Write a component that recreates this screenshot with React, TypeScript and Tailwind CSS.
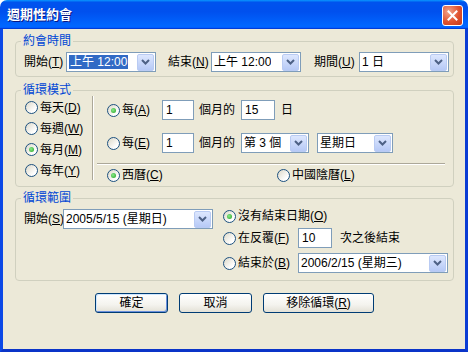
import type { ReactNode } from "react"

function Key({ k }: { k: string }) {
  return (
    <>
      (<span className="underline underline-offset-[1px]">{k}</span>)
    </>
  )
}

function Radio({ checked = false }: { checked?: boolean }) {
  return (
    <span className="flex h-[13px] w-[13px] shrink-0 items-center justify-center rounded-full border border-[#1C5180] bg-[linear-gradient(135deg,#DCD8C8,#FFFFFF_75%)]">
      {checked && (
        <span className="h-[5px] w-[5px] rounded-full bg-[radial-gradient(circle_at_40%_40%,#8BEA8B,#21A121)]" />
      )}
    </span>
  )
}

function DropButton() {
  return (
    <span className="flex h-[17px] w-[17px] shrink-0 items-center justify-center rounded-[2px] border border-[#B9CBF3] bg-[linear-gradient(180deg,#DDE7FE,#B6C9F6)]">
      <svg width="9" height="6" viewBox="0 0 9 6">
        <path d="M1 1 L4.5 4.5 L8 1" fill="none" stroke="#4D6185" strokeWidth="2" />
      </svg>
    </span>
  )
}

function Combo({ className, children }: { className: string; children: ReactNode }) {
  return (
    <div
      className={`flex h-[20px] shrink-0 items-center justify-between border border-[#7F9DB9] bg-white pl-[2px] pr-px ${className}`}
    >
      <span className="truncate leading-[14px]">{children}</span>
      <DropButton />
    </div>
  )
}

function Edit({ className, value }: { className: string; value: string }) {
  return (
    <div className={`flex h-[20px] shrink-0 items-center border border-[#7F9DB9] bg-white pl-[3px] ${className}`}>
      {value}
    </div>
  )
}

function Group({ title, className, children }: { title: string; className: string; children: ReactNode }) {
  return (
    <fieldset className={`rounded-[4px] border border-[#D0D0BF] ${className}`}>
      <legend className="ml-[5px] px-[2px] text-[12px] leading-[14px] text-[#0046D5]">{title}</legend>
      {children}
    </fieldset>
  )
}

function Option({ checked, children }: { checked?: boolean; children: ReactNode }) {
  return (
    <span className="flex items-center gap-[2px]">
      <Radio checked={checked} />
      <span>{children}</span>
    </span>
  )
}

function Btn({ className, children, primary }: { className: string; children: ReactNode; primary?: boolean }) {
  return (
    <button
      className={`h-[20px] rounded-[3px] border border-[#003C74] bg-[linear-gradient(180deg,#FFFFFF,#F4F3EE_60%,#E3E1D6)] text-[12px] leading-[14px] text-black ${
        primary ? "shadow-[inset_1px_1px_0_#CEE7FF,inset_-1px_-1px_0_#6A8FDC]" : ""
      } ${className}`}
    >
      {children}
    </button>
  )
}

export default function App() {
  return (
    <div className="h-[352px] w-[468px] whitespace-nowrap bg-white font-['Liberation_Sans','Noto_Sans_CJK_TC',sans-serif] text-[12px] leading-[14px] text-black">
      <div className="flex h-full flex-col overflow-hidden rounded-t-[7px]">
        {/* Title bar */}
        <div className="flex h-[29px] shrink-0 items-start justify-between bg-[linear-gradient(180deg,#0997FF,#0053EE_8%,#0050EE_40%,#0066FF_88%,#0066FF_93%,#005BFF_95%,#003DD7_96%,#003DD7)] pl-[7px] pr-[5px]">
          <span className="mt-[7px] text-[13px] font-bold leading-[16px] text-white [text-shadow:1px_1px_#0A1883]">
            週期性約會
          </span>
          <span className="mt-[5px] flex h-[21px] w-[21px] items-center justify-center rounded-[3px] border border-white bg-[radial-gradient(circle_at_30%_30%,#F1A58C,#E0522F_55%,#C4381A)]">
            <svg width="11" height="11" viewBox="0 0 11 11">
              <path d="M1.5 1.5 L9.5 9.5 M9.5 1.5 L1.5 9.5" stroke="white" strokeWidth="2" strokeLinecap="square" />
            </svg>
          </span>
        </div>

        {/* Body */}
        <div className="flex flex-1 flex-col border-b-[3px] border-l-[3px] border-r-[3px] border-b-[#0A34C8] border-l-[#0B48E6] border-r-[#0A3CD4] bg-[#ECE9D8] pl-[12px] pr-[11px]">
          <Group title="約會時間" className="mt-[5px]">
            <div className="flex items-center py-[4px] pl-[8px]">
              <span className="w-[42px]">
                開始<Key k="T" />
              </span>
              <div className="flex h-[20px] w-[90px] items-center justify-between border border-[#7F9DB9] bg-white pl-[2px] pr-px">
                <span className="bg-[#316AC5] px-px leading-[14px] text-white">上午 12:00</span>
                <DropButton />
              </div>
              <span className="ml-[12px] w-[43px]">
                結束<Key k="N" />
              </span>
              <Combo className="w-[90px]">上午 12:00</Combo>
              <span className="ml-[13px] w-[45px]">
                期間<Key k="U" />
              </span>
              <Combo className="w-[90px]">1 日</Combo>
            </div>
          </Group>

          <Group title="循環模式" className="mt-[6px]">
            <div className="flex h-[89px]">
              <div className="flex w-[76px] flex-col pl-[9px]">
                {[
                  ["每天", "D", false],
                  ["每週", "W", false],
                  ["每月", "M", true],
                  ["每年", "Y", false],
                ].map(([t, k, c]) => (
                  <div key={k as string} className="flex h-[21px] items-center">
                    <Option checked={c as boolean}>
                      {t as string}
                      <Key k={k as string} />
                    </Option>
                  </div>
                ))}
              </div>
              <div className="-mt-px h-[84px] w-[2px] border-l border-r border-l-[#ACA899] border-r-white" />
              <div className="flex flex-1 flex-col pl-[3px] pr-[8px] pt-[3px]">
                <div className="flex items-center pl-[10px]">
                  <span className="w-[55px]">
                    <Option checked>
                      每<Key k="A" />
                    </Option>
                  </span>
                  <Edit className="w-[32px]" value="1" />
                  <span className="ml-[5px]">個月的</span>
                  <Edit className="ml-[6px] w-[34px]" value="15" />
                  <span className="ml-[6px]">日</span>
                </div>
                <div className="mt-[13px] flex items-center pl-[10px]">
                  <span className="w-[55px]">
                    <Option>
                      每<Key k="E" />
                    </Option>
                  </span>
                  <Edit className="w-[32px]" value="1" />
                  <span className="ml-[5px]">個月的</span>
                  <Combo className="ml-[6px] w-[68px]">第 3 個</Combo>
                  <Combo className="ml-[8px] w-[76px]">星期日</Combo>
                </div>
                <div className="mt-[10px] h-[2px] border-b border-t border-b-white border-t-[#ACA899]" />
                <div className="flex h-[20px] items-center pl-[10px]">
                  <span className="w-[170px]">
                    <Option checked>
                      西曆<Key k="C" />
                    </Option>
                  </span>
                  <Option>
                    中國陰曆<Key k="L" />
                  </Option>
                </div>
              </div>
            </div>
          </Group>

          <Group title="循環範圍" className="mt-[4px]">
            <div className="flex h-[75px] pl-[8px]">
              <div className="flex items-start pt-[4px]">
                <span className="flex h-[20px] w-[39px] shrink-0 items-center">
                  開始<Key k="S" />
                </span>
                <Combo className="w-[150px]">2005/5/15 (星期日)</Combo>
              </div>
              <div className="ml-[10px] flex flex-col pt-[1px]">
                <div className="flex h-[20px] items-center">
                  <Option checked>
                    沒有結束日期<Key k="O" />
                  </Option>
                </div>
                <div className="mt-[2px] flex h-[20px] items-center">
                  <span className="w-[75px]">
                    <Option>
                      在反覆<Key k="F" />
                    </Option>
                  </span>
                  <Edit className="w-[34px]" value="10" />
                  <span className="ml-[8px]">次之後結束</span>
                </div>
                <div className="mt-[5px] flex h-[20px] items-center">
                  <span className="w-[75px]">
                    <Option>
                      結束於<Key k="B" />
                    </Option>
                  </span>
                  <Combo className="w-[150px]">2006/2/15 (星期三)</Combo>
                </div>
              </div>
            </div>
          </Group>

          <div className="mt-[12px] flex justify-center gap-[11px]">
            <Btn className="w-[73px]" primary>
              確定
            </Btn>
            <Btn className="w-[73px]">取消</Btn>
            <Btn className="w-[111px]">
              移除循環<Key k="R" />
            </Btn>
          </div>
        </div>
      </div>
    </div>
  )
}
